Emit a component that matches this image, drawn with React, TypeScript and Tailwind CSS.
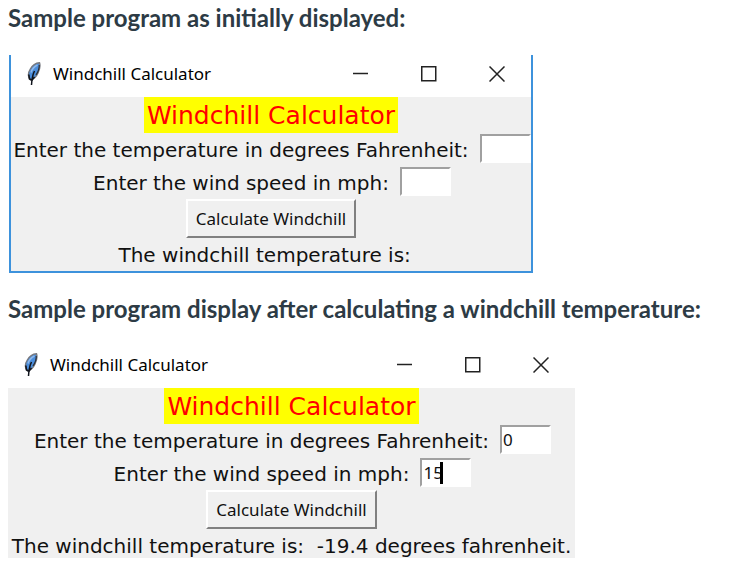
import { useId, useState } from 'react';
import type { FormEvent } from 'react';

// NWS formula, temperature in °F and wind speed in mph
function windchill(temp: number, wind: number) {
  const w = Math.pow(wind, 0.16);
  return 35.74 + 0.6215 * temp - 35.75 * w + 0.4275 * temp * w;
}

function FeatherIcon() {
  return (
    <svg width="14" height="24" viewBox="0 0 14 24" aria-hidden="true">
      <path
        d="M3.500 18C0.800 15.500 0.800 11 3 7.500C5 4 8.500 1 12.500 0.800C13.500 4 12.500 8 11 11C9.500 14.500 7 17 3.500 18Z"
        fill="#4a8ddb"
        stroke="#77797f"
        strokeWidth="1.400"
      />
      <path d="M10.500 3C7.500 4.500 5 7 4 10.500" fill="none" stroke="#8fb8ea" strokeWidth="1.500" />
      <path d="M12.200 3C12.500 6 11 10 9 13" fill="none" stroke="#2b2e36" strokeWidth="1.200" />
      <path d="M7.500 9C6 12 5 15 4.500 23" fill="none" stroke="#10141c" strokeWidth="1.500" />
      <path d="M1.800 12.500L2.500 17L5 18L7.500 15" fill="none" stroke="#10141c" strokeWidth="1.600" />
    </svg>
  );
}

function TitleBar({ title }: { title: string }) {
  const button = 'flex h-10 w-[68px] items-center justify-center';

  return (
    <div className="flex h-[42px] items-center bg-white pb-1 pl-4 font-['Noto_Sans',sans-serif] text-black">
      <FeatherIcon />
      <span className="ml-3 flex-1 text-[17px]">{title}</span>
      <button type="button" aria-label="Minimize" className={button}>
        <svg width="16" height="16" viewBox="0 0 16 16" fill="none" stroke="#222" strokeWidth="1.500">
          <path d="M0 7.500H15" />
        </svg>
      </button>
      <button type="button" aria-label="Maximize" className={button}>
        <svg width="16" height="16" viewBox="0 0 16 16" fill="none" stroke="#222" strokeWidth="1.500">
          <rect x="0.750" y="0.750" width="14" height="14" />
        </svg>
      </button>
      <button type="button" aria-label="Close" className={button}>
        <svg width="16" height="16" viewBox="0 0 16 16" fill="none" stroke="#222" strokeWidth="1.500">
          <path d="M0.500 0.500L15.500 15.500M15.500 0.500L0.500 15.500" />
        </svg>
      </button>
    </div>
  );
}

type EntryProps = {
  label: string;
  value: string;
  caret?: boolean;
  onChange: (value: string) => void;
};

function Entry({ label, value, caret, onChange }: EntryProps) {
  const id = useId();

  return (
    <div className="flex h-[33px] items-start justify-center gap-[11px] pt-px pl-0.5">
      <label htmlFor={id} className="leading-8 whitespace-nowrap">
        {label}
      </label>
      <div className="relative flex">
        <input
          id={id}
          type="text"
          value={value}
          onChange={(e) => onChange(e.target.value)}
          className="h-[29px] w-[51px] border-2 border-t-[#a0a0a0] border-r-white border-b-white border-l-[#a0a0a0] bg-white px-px font-['Noto_Sans',sans-serif] text-[17px] outline-none"
        />
        {caret && <span className="absolute top-1 left-5 h-[22px] w-[3px] bg-black" />}
      </div>
    </div>
  );
}

type CalculatorProps = {
  initialTemp?: string;
  initialWind?: string;
  caret?: boolean;
};

function Calculator({ initialTemp = '', initialWind = '', caret }: CalculatorProps) {
  const [temp, setTemp] = useState(initialTemp);
  const [wind, setWind] = useState(initialWind);
  const [result, setResult] = useState<number | null>(
    initialTemp && initialWind ? windchill(Number(initialTemp), Number(initialWind)) : null
  );

  function handleSubmit(e: FormEvent) {
    e.preventDefault();
    setResult(windchill(Number(temp), Number(wind)));
  }

  return (
    <form
      onSubmit={handleSubmit}
      className="flex flex-col items-center bg-[#f0f0f0] font-['DejaVu_Sans',Verdana,sans-serif] text-[20px] text-[#111]"
    >
      <h2 className="h-9 bg-[#ffff00] px-[3px] text-[25px] leading-[38px] text-[#ff0000]">Windchill Calculator</h2>
      <Entry label="Enter the temperature in degrees Fahrenheit:" value={temp} onChange={setTemp} />
      <Entry label="Enter the wind speed in mph:" value={wind} onChange={setWind} caret={caret} />
      <button
        type="submit"
        className="h-[39px] border-2 border-t-white border-r-[#808080] border-b-[#808080] border-l-white px-2 font-['Noto_Sans',sans-serif] text-[17px]"
      >
        Calculate Windchill
      </button>
      <output className="h-[29px] whitespace-pre leading-[34px]">
        {result === null
          ? 'The windchill temperature is:  '
          : `The windchill temperature is:  ${result.toFixed(1)} degrees fahrenheit.`}
      </output>
    </form>
  );
}

export default function App() {
  const heading = "font-['Lato',sans-serif] text-2xl font-bold text-[#2d3b45]";

  return (
    <main className="min-h-screen bg-white px-2 pt-0.5">
      <h1 className={heading}>Sample program as initially displayed:</h1>
      <section className="mt-[21px] ml-px w-full max-w-[524px] border-x-2 border-b-2 border-[#3d92dc] bg-[#f0f0f0] pb-1">
        <TitleBar title="Windchill Calculator" />
        <Calculator />
      </section>

      <h1 className={`mt-5 ${heading}`}>Sample program display after calculating a windchill temperature:</h1>
      <section className="mt-[21px] w-full max-w-[567px]">
        <TitleBar title="Windchill Calculator" />
        <Calculator initialTemp="0" initialWind="15" caret />
      </section>
    </main>
  );
}
